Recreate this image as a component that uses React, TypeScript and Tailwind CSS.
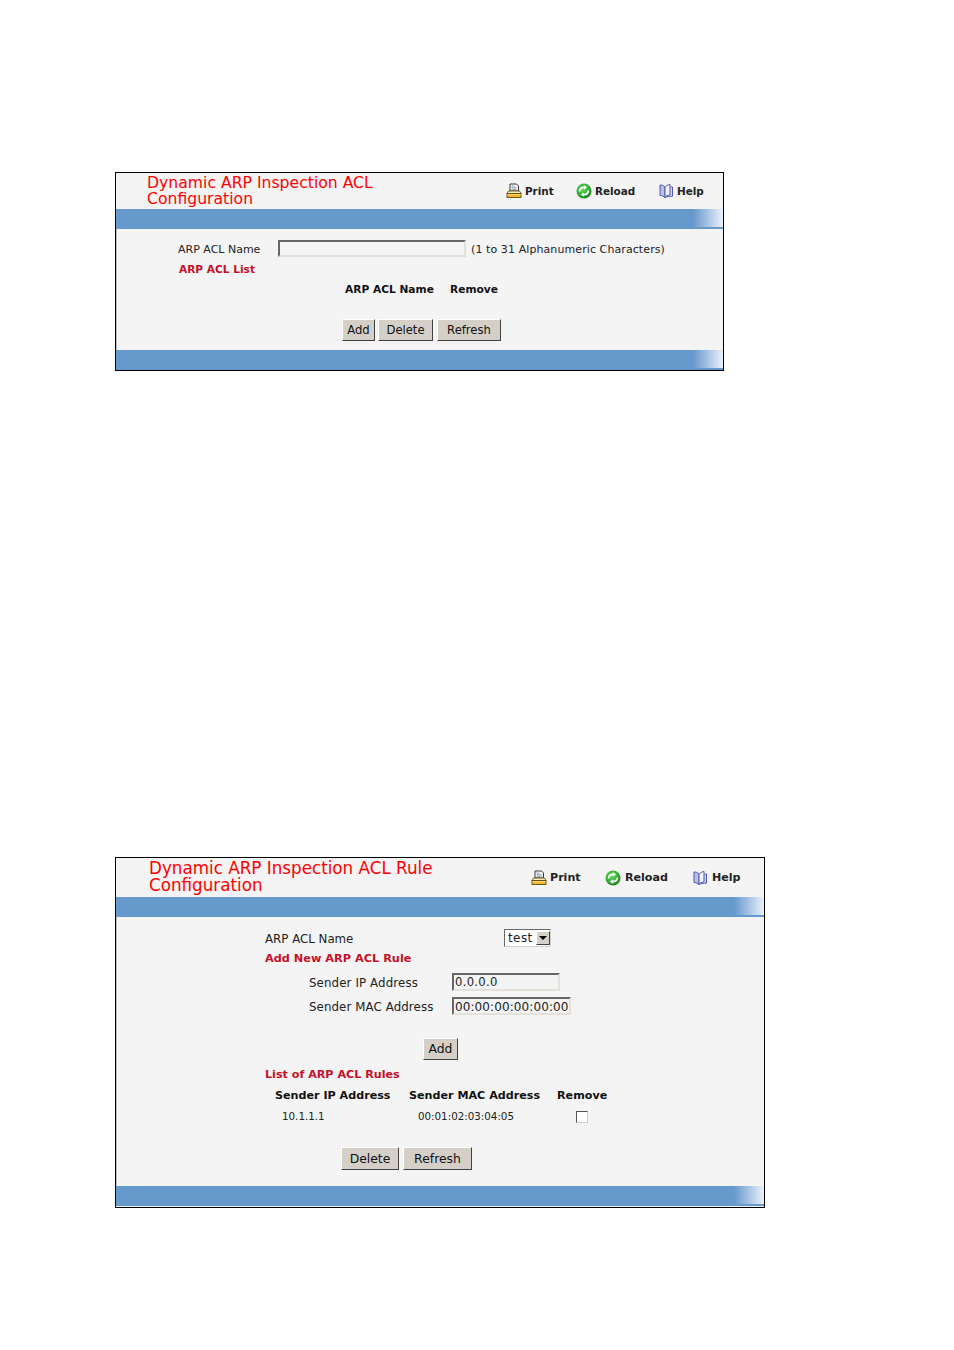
import React from "react";

const PrinterIcon = ({ s = 16 }: { s?: number }) => (
  <svg width={s} height={s} viewBox="0 0 16 16" className="shrink-0">
    <path d="M4 1h6.500L12.500 3V8H4z" fill="#fff" stroke="#3a3a3a" strokeWidth="1" />
    <path d="M5.500 3h3M5.500 4.700h5M5.500 6.300h5" stroke="#6f7f92" strokeWidth="0.8" />
    <path d="M2.500 8h11l1.500 2.500H1z" fill="#ffeeb0" stroke="#4a4020" strokeWidth="0.8" />
    <rect x="1" y="10.500" width="14" height="4" fill="#f7b32a" stroke="#5a4a1c" strokeWidth="0.9" />
    <rect x="1.500" y="11" width="13" height="1.200" fill="#ffd860" />
  </svg>
);

const ReloadIcon = ({ s = 16 }: { s?: number }) => (
  <svg width={s} height={s} viewBox="0 0 16 16" className="shrink-0">
    <defs>
      <radialGradient id="reloadG" cx="40%" cy="35%" r="70%">
        <stop offset="0%" stopColor="#6fdc62" />
        <stop offset="70%" stopColor="#2aa52c" />
        <stop offset="100%" stopColor="#14741c" />
      </radialGradient>
    </defs>
    <circle cx="8" cy="8" r="7.500" fill="url(#reloadG)" />
    <path d="M3.600 8.500C3.600 5.600 6 4 8.600 4.400" fill="none" stroke="#fff" strokeWidth="1.700" />
    <path d="M8 2.200l3.300 2.200L8 6.600z" fill="#fff" />
    <path d="M12.400 7.500c0 2.900-2.400 4.500-5 4.100" fill="none" stroke="#fff" strokeWidth="1.700" />
    <path d="M8 13.800l-3.300-2.200L8 9.400z" fill="#fff" />
  </svg>
);

const BookIcon = ({ s = 16 }: { s?: number }) => (
  <svg width={s} height={s} viewBox="0 0 16 16" className="shrink-0">
    <path d="M7 4C5.500 2.500 3.500 1.800 2 2v10.500c2 0 3.800.7 5 2z" fill="#b9c0ec" stroke="#4f58a6" strokeWidth="1" />
    <path d="M7.500 14.500c1.500-1 3.500-1.300 7-1.300V4h-2" fill="#cfd4f3" stroke="#4f58a6" strokeWidth="1" />
    <path d="M7 4.500c1-1.600 3-2.800 5-3v10.300c-2 .3-4 1.200-5 2.700z" fill="#f2f3fc" stroke="#4f58a6" strokeWidth="1" />
  </svg>
);

const Bar = () => (
  <div className="flex h-[20px] justify-end bg-[#6699cc]">
    <div className="mb-[2px] w-[30px] bg-gradient-to-r from-[#6699cc] to-[#eaf1f9]" />
  </div>
);

const Btn = ({ w, h, mr, size, children }: { w: string; h: string; mr?: string; size: string; children: React.ReactNode }) => (
  <button
    type="button"
    className={`${w} ${h} ${mr ?? ""} ${size} border border-t-white border-l-white border-r-[#404040] border-b-[#404040] bg-[#d4d0c8] text-center leading-none text-[#111]`}
  >
    {children}
  </button>
);

const fieldCls =
  "border-2 border-t-[#666] border-l-[#666] border-r-[#e4e1da] border-b-[#e4e1da] bg-[#f4f4f4] text-[#222] outline-none";

export default function App() {
  return (
    <div className="min-h-[1350px] bg-white pl-[115px] pt-[172px] font-['DejaVu_Sans',sans-serif]">
      {/* first panel */}
      <section className="h-[199px] w-[609px] border border-black bg-[#f4f4f4]">
        <header className="flex h-[36px] items-start">
          <h1 className="ml-[31px] mt-[2px] w-[330px] pr-[90px] text-[15.65px] font-normal leading-[16px] text-[#ff0000]">
            Dynamic ARP Inspection ACL Configuration
          </h1>
          <nav className="ml-[29px] mt-[9px] flex items-center text-[10.4px] font-bold leading-[16px] text-[#222]">
            <PrinterIcon />
            <span className="ml-[3px] mt-[1px] w-[28px]">Print</span>
            <span className="ml-[23px]"><ReloadIcon /></span>
            <span className="ml-[3px] mt-[1px] w-[40px]">Reload</span>
            <span className="ml-[23px]"><BookIcon /></span>
            <span className="ml-[3px] mt-[1px]">Help</span>
          </nav>
        </header>
        <Bar />
        <div className="h-[121px] border-l border-[#bbbbbb] pl-[61px] pt-[11px] text-[11px] leading-[17px] text-[#222]">
          <div className="flex h-[17px] items-center">
            <span className="mt-[2px] w-[100px]">ARP ACL Name</span>
            <input readOnly className={`h-[17px] w-[188px] ${fieldCls}`} />
            <span className="ml-[5px] mt-[2px] tracking-[0.09px]">(1 to 31 Alphanumeric Characters)</span>
          </div>
          <div className="mt-[4px] h-[17px] pl-[1px] text-[10.6px] font-bold text-[#c4102a]">ARP ACL List</div>
          <div className="mt-[3px] flex h-[17px] pl-[167px] text-[10.65px] font-bold text-[#111]">
            <span className="w-[105px]">ARP ACL Name</span>
            <span>Remove</span>
          </div>
          <div className="mt-[21px] flex pl-[164px]">
            <Btn w="w-[33px]" h="h-[22px]" mr="mr-[3px]" size="pt-[2px] text-[11.6px]">Add</Btn>
            <Btn w="w-[55px]" h="h-[22px]" mr="mr-[4px]" size="pt-[2px] text-[11.6px]">Delete</Btn>
            <Btn w="w-[64px]" h="h-[22px]" size="pt-[2px] text-[11.6px]">Refresh</Btn>
          </div>
        </div>
        <Bar />
      </section>

      {/* second panel */}
      <section className="mt-[486px] h-[351px] w-[650px] border border-black bg-[#f4f4f4]">
        <header className="flex h-[39px] items-start">
          <h1 className="ml-[33px] mt-[2px] w-[340px] text-[16.75px] font-normal leading-[17px] text-[#ff0000]">
            Dynamic ARP Inspection ACL Rule Configuration
          </h1>
          <nav className="ml-[42px] mt-[11px] flex items-center text-[11.1px] font-bold leading-[16px] text-[#222]">
            <PrinterIcon />
            <span className="ml-[3px] mt-[1px] w-[29px]">Print</span>
            <span className="ml-[26px]"><ReloadIcon /></span>
            <span className="ml-[4px] mt-[1px] w-[43px]">Reload</span>
            <span className="ml-[24px]"><BookIcon /></span>
            <span className="ml-[4px] mt-[1px]">Help</span>
          </nav>
        </header>
        <Bar />
        <div className="h-[269px] border-l border-[#bbbbbb] pt-[12px] text-[11.8px] leading-[17px] text-[#222]">
          <div className="flex h-[17px] items-center pl-[148px]">
            <span className="mt-[3px] w-[239px]">ARP ACL Name</span>
            <div className="flex h-[18px] w-[47px] items-center border border-t-[#666] border-l-[#666] border-r-[#d4d0c8] border-b-[#d4d0c8] bg-white">
              <span className="ml-[3px] w-[28px] text-[12px] leading-none tracking-[0.4px]">test</span>
              <span className="flex h-[14px] w-[14px] items-center justify-center border border-t-white border-l-white border-r-[#404040] border-b-[#404040] bg-[#d4d0c8]">
                <span className="border-x-[4px] border-t-[4px] border-x-transparent border-t-black" />
              </span>
            </div>
          </div>
          <div className="mt-[4px] h-[17px] pl-[148px] text-[11.3px] font-bold text-[#c4102a]">Add New ARP ACL Rule</div>
          <div className="mt-[6px] flex h-[18px] items-center pl-[192px]">
            <span className="mt-[2px] w-[143px] tracking-[0.12px]">Sender IP Address</span>
            <input readOnly value="0.0.0.0" className={`h-[18px] w-[108px] px-[1px] text-[11.6px] tracking-[0.3px] ${fieldCls}`} />
          </div>
          <div className="mt-[6px] flex h-[18px] items-center pl-[192px]">
            <span className="mt-[2px] w-[143px] tracking-[0.1px]">Sender MAC Address</span>
            <input readOnly value="00:00:00:00:00:00" className={`h-[18px] w-[119px] px-[1px] pt-[1px] text-[12px] tracking-[0.1px] ${fieldCls}`} />
          </div>
          <div className="mt-[23px] flex pl-[306px]">
            <Btn w="w-[35px]" h="h-[22px]" size="text-[12.4px]">Add</Btn>
          </div>
          <div className="mt-[6px] h-[17px] pl-[148px] text-[11.15px] font-bold text-[#c4102a]">List of ARP ACL Rules</div>
          <div className="mt-[4px] flex h-[17px] pl-[158px] text-[11.15px] font-bold text-[#111]">
            <span className="w-[134px]">Sender IP Address</span>
            <span className="w-[148px]">Sender MAC Address</span>
            <span>Remove</span>
          </div>
          <div className="mt-[4px] flex h-[17px] items-center pl-[165px] text-[10.3px]">
            <span className="w-[136px]">10.1.1.1</span>
            <span className="w-[158px]">00:01:02:03:04:05</span>
            <span className="h-[12px] w-[12px] border border-t-[#555] border-l-[#555] border-r-[#ccc] border-b-[#ccc] bg-white" />
          </div>
          <div className="mt-[22px] flex pl-[224px]">
            <Btn w="w-[58px]" h="h-[23px]" mr="mr-[4px]" size="pt-[2px] text-[12.4px]">Delete</Btn>
            <Btn w="w-[69px]" h="h-[23px]" size="pt-[2px] text-[12.4px]">Refresh</Btn>
          </div>
        </div>
        <Bar />
      </section>
    </div>
  );
}
